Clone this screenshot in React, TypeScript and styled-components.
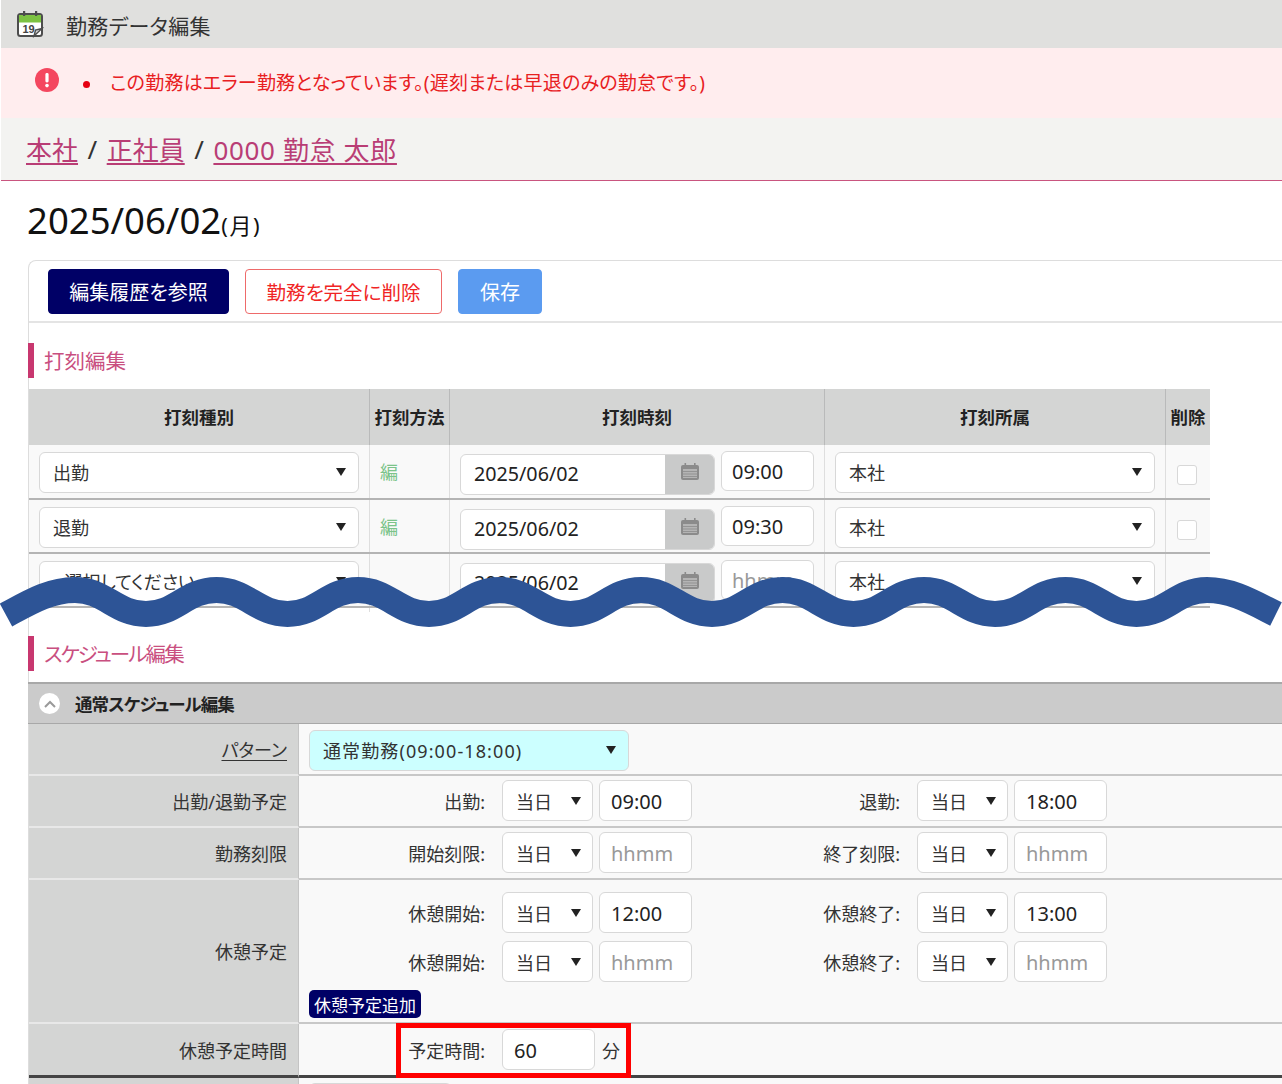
import React from "react";
import styled, { createGlobalStyle } from "styled-components";

const GlobalStyle = createGlobalStyle`
  html, body {
    margin: 0;
    padding: 0;
    background: #ffffff;
    overflow: hidden;
  }
  body {
    font-family: "Noto Sans", "Noto Sans CJK JP", sans-serif;
    font-feature-settings: "palt";
    color: #222222;
  }
  * {
    box-sizing: border-box;
  }
`;

const PUNCH_ROWS = [
  { kind: "出勤", method: "編", time: "09:00", deletable: true },
  { kind: "退勤", method: "編", time: "09:30", deletable: true },
  { kind: "--選択してください--", method: "", time: "", deletable: false },
];

// crests every 141.5px, generated so the wave stays regular
const buildWave = () => {
  let d = "M6 615 C 30 602, 50 590, 75 590";
  for (let i = 0; i < 8; i++) {
    const x = 75 + 141.5 * i;
    d += ` C ${x + 30} 590, ${x + 41} 614, ${x + 71} 614`;
    d += ` C ${x + 101} 614, ${x + 111} 590, ${x + 141.5} 590`;
  }
  return d + " C 1232 590, 1252 602, 1276 614";
};

const CalendarLogo = () => (
  <svg width="28" height="28" viewBox="0 0 28 28">
    <rect x="2" y="4" width="24" height="22" rx="2.5" fill="#ffffff" stroke="#4d4d4d" strokeWidth="2" />
    <rect x="3" y="5" width="22" height="7.5" fill="#7cc242" />
    <rect x="7" y="1" width="2.2" height="5" fill="#4d4d4d" />
    <rect x="19" y="1" width="2.2" height="5" fill="#4d4d4d" />
    <text x="6.5" y="22.5" fontSize="11" fontWeight="700" fill="#444" fontFamily="Liberation Sans">19</text>
    <path d="M18 26 L26 18.5 L19.5 20 Z" fill="#d4d4d4" stroke="#4d4d4d" strokeWidth="1.4" />
  </svg>
);

const AlertIcon = () => (
  <svg width="24" height="24" viewBox="0 0 24 24">
    <circle cx="12" cy="12" r="12" fill="#f4475f" />
    <rect x="10.4" y="5" width="3.2" height="9.5" rx="1.4" fill="#ffffff" />
    <circle cx="12" cy="17.6" r="1.8" fill="#ffffff" />
  </svg>
);

const PickerIcon = () => (
  <svg width="18" height="17" viewBox="0 0 18 17">
    <rect x="0" y="2" width="18" height="15" rx="2" fill="#8b8b8b" />
    <rect x="3.5" y="0" width="1.6" height="3" fill="#8b8b8b" />
    <rect x="13" y="0" width="1.6" height="3" fill="#8b8b8b" />
    <rect x="2" y="6" width="14" height="9" fill="#b4b4b4" />
    <path d="M2 8.5h14M2 11h14M2 13.5h14" stroke="#8b8b8b" strokeWidth="0.8" />
  </svg>
);

const ChevronUp = () => (
  <svg width="12" height="8" viewBox="0 0 12 8">
    <path d="M1 7 L6 2 L11 7" fill="none" stroke="#9a9a9a" strokeWidth="2" />
  </svg>
);

const TimeFields = ({
  label1,
  label2,
  value1,
  value2,
}: {
  label1: string;
  label2: string;
  value1?: string;
  value2?: string;
}) => (
  <FieldLine>
    <FieldLabel $width={203}>{label1}</FieldLabel>
    <DaySelect>当日</DaySelect>
    <FormTime $width={93} $empty={!value1}>{value1 || "hhmm"}</FormTime>
    <FieldLabel $width={225}>{label2}</FieldLabel>
    <DaySelect>当日</DaySelect>
    <FormTime $width={93} $empty={!value2}>{value2 || "hhmm"}</FormTime>
  </FieldLine>
);

const App = () => {
  return (
    <Page>
      <GlobalStyle />
      <TitleBar>
        <CalendarLogo />
        <PageTitle>勤務データ編集</PageTitle>
      </TitleBar>
      <AlertBar>
        <AlertIconSlot>
          <AlertIcon />
        </AlertIconSlot>
        <AlertBullet />
        <AlertText>この勤務はエラー勤務となっています。(遅刻または早退のみの勤怠です。)</AlertText>
      </AlertBar>
      <Breadcrumb>
        <CrumbLink>本社</CrumbLink>
        <CrumbSep>/</CrumbSep>
        <CrumbLink>正社員</CrumbLink>
        <CrumbSep>/</CrumbSep>
        <CrumbLink $spread>0000 勤怠 太郎</CrumbLink>
      </Breadcrumb>
      <Main>
        <DateTitle>
          2025/06/02<Weekday>(月)</Weekday>
        </DateTitle>
        <Panel>
          <Toolbar>
            <NavyButton>編集履歴を参照</NavyButton>
            <DangerButton>勤務を完全に削除</DangerButton>
            <SaveButton>保存</SaveButton>
          </Toolbar>

          <SectionTitle>打刻編集</SectionTitle>
          <PunchTable>
            <PunchHead>
              <HeadCell>打刻種別</HeadCell>
              <HeadCell>打刻方法</HeadCell>
              <HeadCell>打刻時刻</HeadCell>
              <HeadCell>打刻所属</HeadCell>
              <HeadCell>削除</HeadCell>
            </PunchHead>
            {PUNCH_ROWS.map((row, i) => (
              <PunchRow key={i} $first={i === 0}>
                <BodyCell $pad={10}>
                  <WideSelect $width={320}>{row.kind}</WideSelect>
                </BodyCell>
                <BodyCell $pad={10}>
                  <MethodMark>{row.method}</MethodMark>
                </BodyCell>
                <BodyCell $pad={10}>
                  <DateGroup>
                    <DateValue>2025/06/02</DateValue>
                    <DateAddon>
                      <PickerIcon />
                    </DateAddon>
                  </DateGroup>
                  <TimeBox $width={93} $empty={!row.time}>{row.time || "hhmm"}</TimeBox>
                </BodyCell>
                <BodyCell $pad={10}>
                  <WideSelect $width={320}>本社</WideSelect>
                </BodyCell>
                <BodyCell $pad={11}>{row.deletable && <CheckBox />}</BodyCell>
              </PunchRow>
            ))}
            <PunchStub>
              <StubCell />
              <StubCell />
              <StubCell />
              <StubCell />
              <StubCell />
            </PunchStub>
          </PunchTable>

          <SectionTitle $spaced $tight>スケジュール編集</SectionTitle>
          <AccordionHead>
            <AccordionToggle>
              <ChevronUp />
            </AccordionToggle>
            通常スケジュール編集
          </AccordionHead>

          <FormRow $height={52}>
            <RowLabel>
              <PatternLink>パターン</PatternLink>
            </RowLabel>
            <RowBody $top={5} $indent={10}>
              <WideSelect $width={320} $tint>通常勤務(09:00-18:00)</WideSelect>
            </RowBody>
          </FormRow>
          <FormRow $height={52}>
            <RowLabel>出勤/退勤予定</RowLabel>
            <RowBody $top={4}>
              <TimeFields label1="出勤:" value1="09:00" label2="退勤:" value2="18:00" />
            </RowBody>
          </FormRow>
          <FormRow $height={52}>
            <RowLabel>勤務刻限</RowLabel>
            <RowBody $top={4}>
              <TimeFields label1="開始刻限:" label2="終了刻限:" />
            </RowBody>
          </FormRow>
          <FormRow $height={144}>
            <RowLabel>休憩予定</RowLabel>
            <RowBody $top={12}>
              <FieldStack>
                <TimeFields label1="休憩開始:" value1="12:00" label2="休憩終了:" value2="13:00" />
                <TimeFields label1="休憩開始:" label2="休憩終了:" />
              </FieldStack>
              <AddBreakButton>休憩予定追加</AddBreakButton>
            </RowBody>
          </FormRow>
          <FormRow $height={54} $strong>
            <RowLabel>休憩予定時間</RowLabel>
            <RowBody $top={5}>
              <FieldLine>
                <FieldLabel $width={203}>予定時間:</FieldLabel>
                <FormTime $width={93}>60</FormTime>
                <UnitText>分</UnitText>
                <Highlight />
              </FieldLine>
            </RowBody>
          </FormRow>
          <FormRow $height={20}>
            <RowLabel />
            <RowBody $top={4} $indent={10}>
              <WideSelect $width={143} />
            </RowBody>
          </FormRow>
        </Panel>
      </Main>
      <WaveOverlay viewBox="0 0 1282 80" width="1282" height="80">
        <path
          d={buildWave()}
          transform="translate(0 -560)"
          fill="none"
          stroke="#2d5496"
          strokeWidth="26"
        />
      </WaveOverlay>
    </Page>
  );
};

const Page = styled.div`
  position: relative;
  width: 1282px;
  height: 1084px;
  overflow: hidden;
  padding-left: 1px;
`;
const TitleBar = styled.header`
  display: flex;
  align-items: center;
  height: 48px;
  padding-left: 15px;
  background: #e0e0de;
`;
const PageTitle = styled.h1`
  margin: 2px 0 0 22px;
  font-size: 21px;
  letter-spacing: 0.3px;
  font-weight: 400;
  color: #333333;
`;
const AlertBar = styled.div`
  display: flex;
  height: 70px;
  background: #ffedee;
`;
const AlertIconSlot = styled.div`
  width: 34px;
  margin: 20px 0 0 34px;
`;
const AlertBullet = styled.span`
  width: 7px;
  height: 7px;
  margin: 33px 0 0 14px;
  border-radius: 50%;
  background: #e60012;
`;
const AlertText = styled.div`
  margin: 20px 0 0 20px;
  font-size: 19px;
  letter-spacing: 0.22px;
  line-height: 30px;
  color: #e8201f;
  white-space: nowrap;
`;
const Breadcrumb = styled.nav`
  display: flex;
  align-items: center;
  height: 63px;
  padding-left: 25px;
  background: #f3f3f1;
  border-bottom: 1px solid #c9557f;
  font-size: 26px;
`;
const CrumbLink = styled.a<{ $spread?: boolean }>`
  color: #b93d75;
  text-decoration: underline;
  text-underline-offset: 3px;
  letter-spacing: ${(p) => (p.$spread ? "0.65px" : "0")};
`;
const CrumbSep = styled.span`
  margin: 0 9.5px;
  color: #333333;
`;
const Main = styled.main`
  padding-left: 26px;
`;
const DateTitle = styled.div`
  display: flex;
  align-items: baseline;
  height: 79px;
  padding-top: 14px;
  font-size: 36.5px;
  line-height: 50px;
  color: #111111;
`;
const Weekday = styled.span`
  font-size: 22px;
  letter-spacing: 1.6px;
`;
const Panel = styled.section`
  width: 1300px;
  margin-left: 1px;
  border-top: 1px solid #dddddd;
  border-left: 1px solid #dddddd;
  border-top-left-radius: 8px;
`;
const Toolbar = styled.div`
  display: flex;
  gap: 16px;
  height: 62px;
  padding: 8px 0 0 19px;
  border-bottom: 2px solid #e4e4e4;
`;
const ToolbarButton = styled.button`
  height: 45px;
  border-radius: 4px;
  font-family: inherit;
  font-feature-settings: inherit;
  font-size: 20px;
  padding: 0;
`;
const NavyButton = styled(ToolbarButton)`
  width: 181px;
  border: 1px solid #000066;
  background: #000066;
  color: #ffffff;
`;
const DangerButton = styled(ToolbarButton)`
  width: 197px;
  border: 1px solid #ee6a6a;
  background: #ffffff;
  color: #f02525;
  font-size: 19.5px;
`;
const SaveButton = styled(ToolbarButton)`
  width: 84px;
  border: 1px solid #5b9bf0;
  background: #5b9bf0;
  color: #ffffff;
`;
const SectionTitle = styled.h2<{ $spaced?: boolean; $tight?: boolean }>`
  display: flex;
  align-items: center;
  height: 35px;
  margin: ${(p) => (p.$spaced ? "24px" : "20px")} 0 11px -1px;
  padding: 0 0 2px 10px;
  border-left: 6px solid #c8376f;
  font-size: 20.5px;
  letter-spacing: ${(p) => (p.$tight ? "-1.9px" : "0")};
  font-weight: 400;
  color: #c94f80;
`;
const PunchTable = styled.div`
  width: 1181px;
`;
const PUNCH_COLUMNS = "341px 80px 375px 341px 44px";
const PunchHead = styled.div`
  display: grid;
  grid-template-columns: ${PUNCH_COLUMNS};
  height: 56px;
  background: #d4d5d4;
`;
const HeadCell = styled.div`
  display: flex;
  align-items: center;
  justify-content: center;
  padding-bottom: 2px;
  border-right: 1px solid #b9baba;
  font-size: 17.5px;
  font-weight: 700;
  color: #222222;
  white-space: nowrap;
  &:last-child {
    border-right: none;
  }
`;
const PunchRow = styled.div<{ $first?: boolean }>`
  display: grid;
  grid-template-columns: ${PUNCH_COLUMNS};
  height: ${(p) => (p.$first ? "55px" : "54px")};
  background: #f9f9f9;
  border-bottom: 2px solid #b4b4b4;
`;
const BodyCell = styled.div<{ $pad: number }>`
  display: flex;
  align-items: flex-start;
  gap: 6px;
  padding: 6px 0 0 ${(p) => p.$pad}px;
  border-right: 1px solid #dedede;
  &:last-child {
    border-right: none;
  }
`;
const PunchStub = styled.div`
  display: grid;
  grid-template-columns: ${PUNCH_COLUMNS};
  height: 4px;
`;
const StubCell = styled.div`
  border-right: 1px solid #dedede;
  &:last-child {
    border-right: none;
  }
`;
const boxBase = `
  height: 41px;
  border: 1.5px solid #d8d8d8;
  border-radius: 6px;
  background: #ffffff;
  font-size: 18px;
  white-space: nowrap;
`;
const WideSelect = styled.div<{ $width: number; $tint?: boolean }>`
  ${boxBase}
  position: relative;
  display: flex;
  align-items: center;
  width: ${(p) => p.$width}px;
  margin-top: 1px;
  padding: 0 0 2px 13px;
  background: ${(p) => (p.$tint ? "#ccffff" : "#ffffff")};
  letter-spacing: ${(p) => (p.$tint ? "1.1px" : "0")};
  color: #333333;
  &::after {
    content: "";
    position: absolute;
    right: 12px;
    top: 15px;
    border-left: 5px solid transparent;
    border-right: 5px solid transparent;
    border-top: 8px solid #222222;
  }
`;
const DaySelect = styled(WideSelect).attrs({ $width: 91 })`
  margin: 0 6px 0 0;
  padding-bottom: 0;
  &::after {
    top: 16px;
    right: 11px;
  }
`;
const TimeBox = styled.div<{ $width: number; $empty?: boolean }>`
  ${boxBase}
  display: flex;
  align-items: center;
  width: ${(p) => p.$width}px;
  height: 40px;
  padding-left: 10px;
  font-size: 20px;
  color: ${(p) => (p.$empty ? "#999999" : "#222222")};
`;
const FormTime = styled(TimeBox)`
  height: 41px;
  padding: 2px 0 0 11px;
`;
const MethodMark = styled.span`
  margin-top: 8px;
  font-size: 18px;
  line-height: 26px;
  color: #7cc48a;
`;
const DateGroup = styled.div`
  display: flex;
  width: 255px;
  height: 41px;
  margin-top: 3px;
  border: 1.5px solid #d8d8d8;
  border-radius: 6px;
  background: #ffffff;
  overflow: hidden;
`;
const DateValue = styled.div`
  flex: 1;
  padding: 4px 0 0 13px;
  font-size: 19.7px;
  line-height: 30px;
  color: #222222;
`;
const DateAddon = styled.div`
  display: flex;
  align-items: flex-start;
  justify-content: center;
  width: 49px;
  padding-top: 8px;
  background: #c9caca;
`;
const CheckBox = styled.div`
  width: 20px;
  height: 20px;
  margin-top: 14px;
  border: 1.5px solid #d8d8d8;
  border-radius: 3px;
  background: #ffffff;
`;
const AccordionHead = styled.div`
  display: flex;
  align-items: center;
  gap: 15px;
  height: 42px;
  margin-left: -1px;
  padding-left: 11px;
  border-top: 2px solid #a8a8a8;
  border-bottom: 1px solid #a8a8a8;
  background: #cbcbcb;
  font-size: 17.5px;
  letter-spacing: -0.9px;
  font-weight: 700;
  color: #222222;
`;
const AccordionToggle = styled.span`
  display: flex;
  align-items: center;
  justify-content: center;
  width: 21px;
  height: 21px;
  border-radius: 50%;
  background: #ffffff;
`;
const FormRow = styled.div<{ $height: number; $strong?: boolean }>`
  display: flex;
  height: ${(p) => p.$height}px;
  ${(p) => p.$strong && "&& > * { border-bottom: 3px solid #444444; }"}
`;
const RowLabel = styled.div`
  display: flex;
  align-items: center;
  justify-content: flex-end;
  flex: 0 0 270px;
  padding-right: 11px;
  background: #d4d5d4;
  border-right: 1px solid #c4c4c4;
  border-bottom: 2px solid #e8e8e8;
  font-size: 18px;
  color: #333333;
`;
const PatternLink = styled.a`
  text-decoration: underline;
  text-underline-offset: 3px;
`;
const RowBody = styled.div<{ $top: number; $indent?: number }>`
  flex: 1;
  padding: ${(p) => p.$top}px 0 0 ${(p) => p.$indent ?? 0}px;
  background: #f9f9f9;
  border-bottom: 2px solid #c8c8c8;
`;
const FieldStack = styled.div`
  display: flex;
  flex-direction: column;
  gap: 8px;
`;
const FieldLine = styled.div`
  position: relative;
  display: flex;
  align-items: center;
  height: 41px;
`;
const FieldLabel = styled.div<{ $width: number }>`
  width: ${(p) => p.$width}px;
  padding-right: 17px;
  text-align: right;
  font-size: 18px;
  color: #333333;
  white-space: nowrap;
`;
const UnitText = styled.span`
  margin-left: 7px;
  font-size: 18px;
  color: #333333;
`;
const AddBreakButton = styled.button`
  display: block;
  width: 112px;
  height: 28px;
  margin: 8px 0 0 10px;
  padding: 0;
  border: none;
  border-radius: 5px;
  background: #000066;
  color: #ffffff;
  font-family: inherit;
  font-feature-settings: inherit;
  font-size: 17px;
`;
const Highlight = styled.div`
  position: absolute;
  left: 97px;
  top: -6px;
  width: 235px;
  height: 55px;
  border: 5px solid #ff0000;
`;
const WaveOverlay = styled.svg`
  position: absolute;
  left: 0;
  top: 560px;
`;

export default App;
